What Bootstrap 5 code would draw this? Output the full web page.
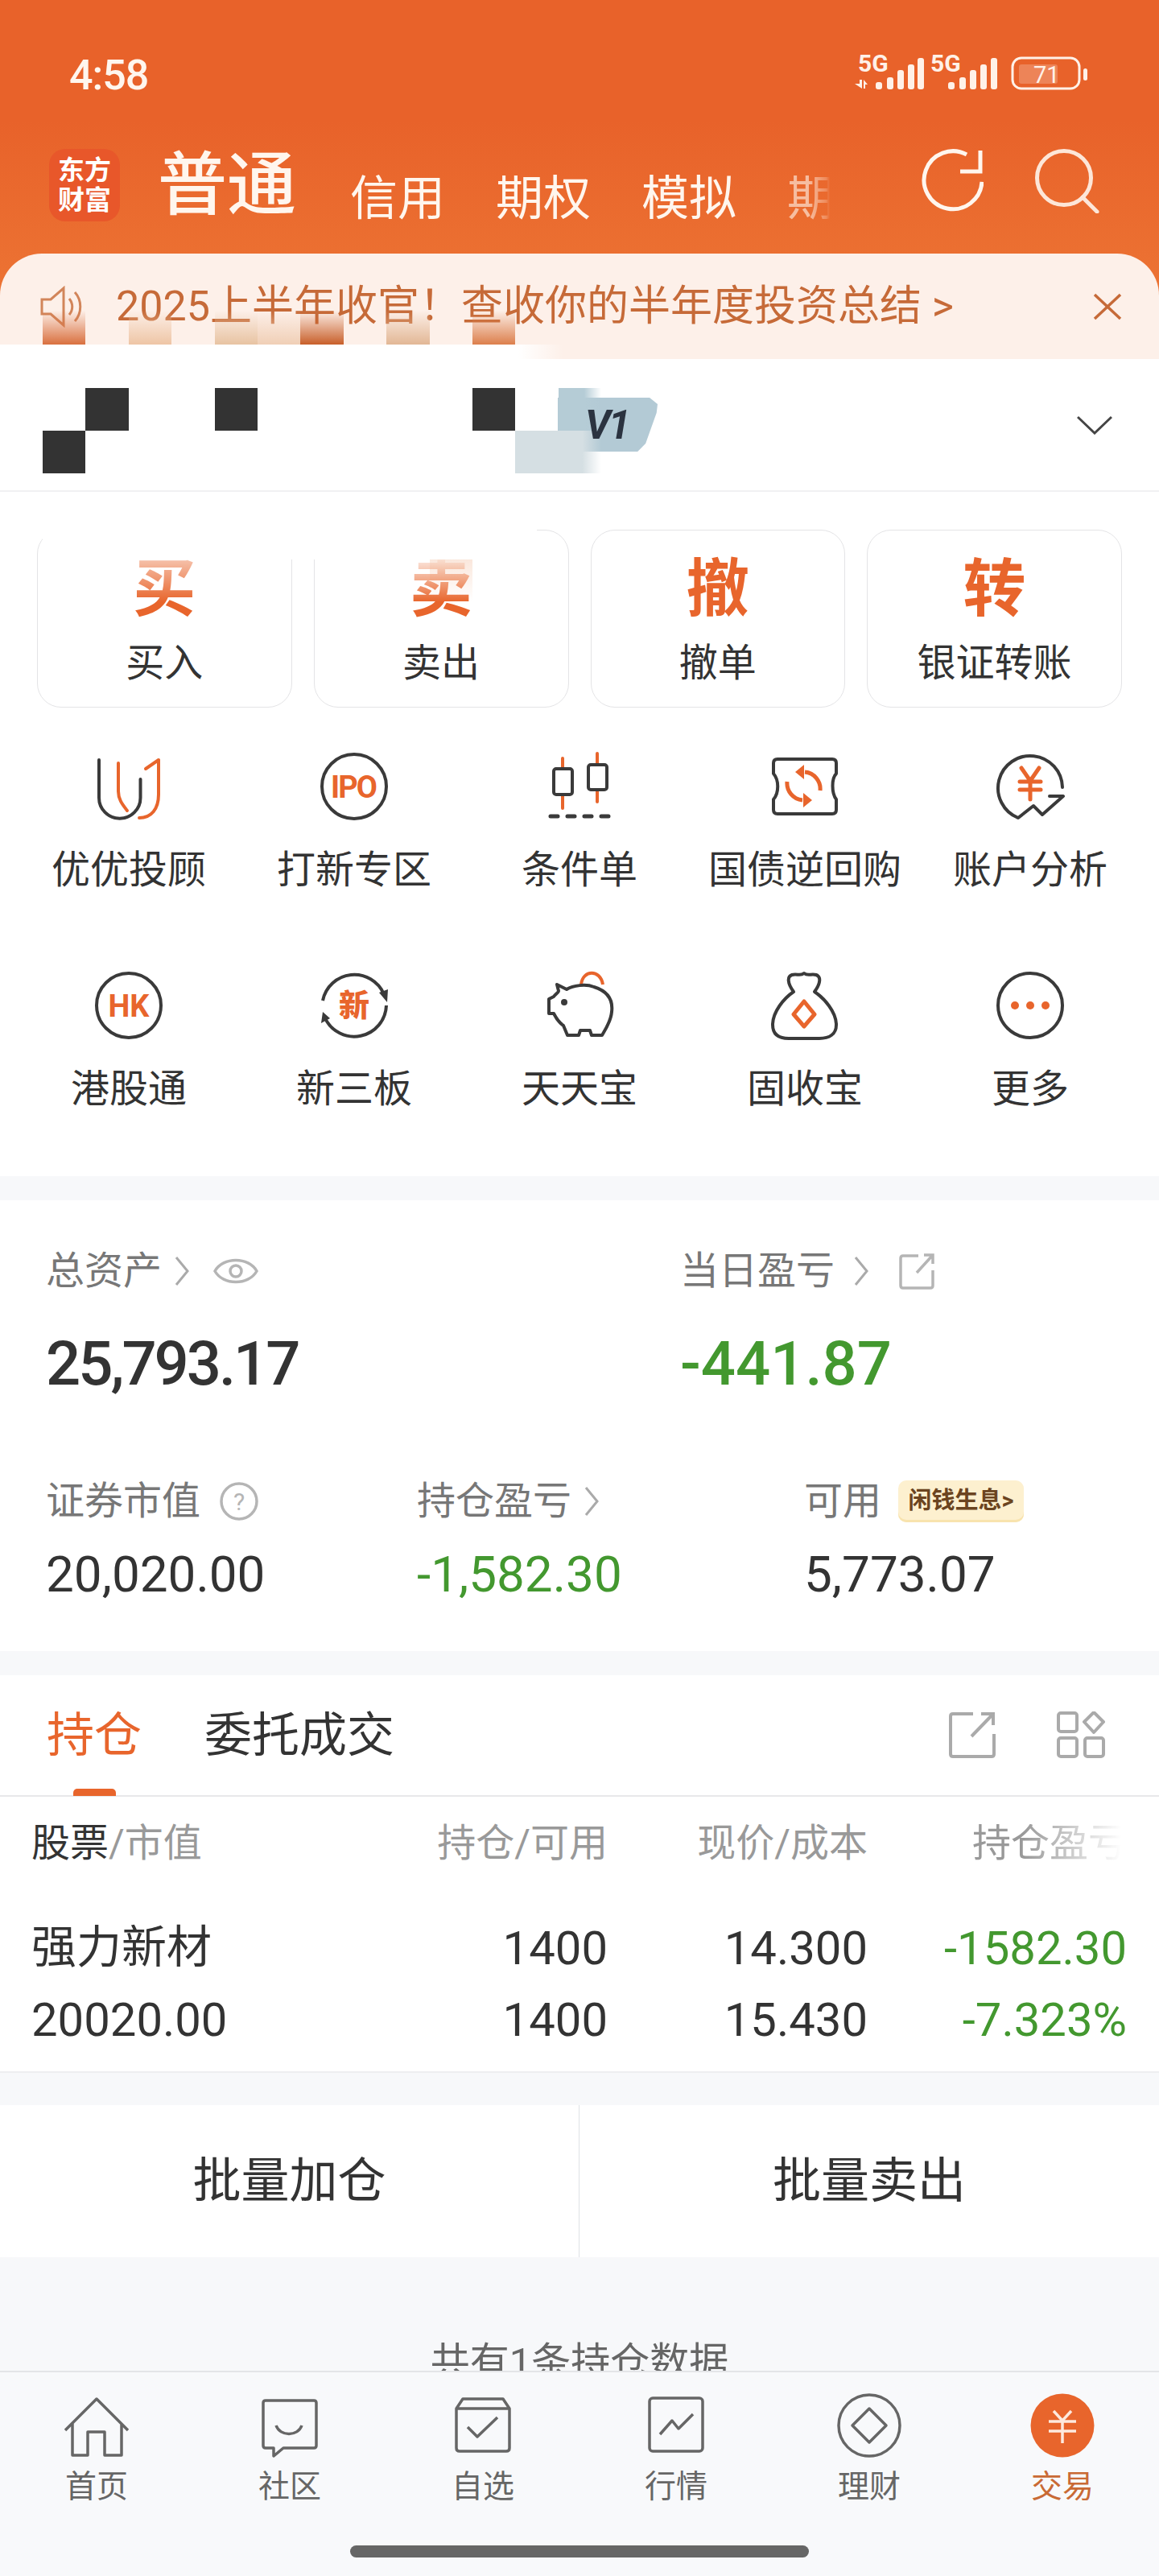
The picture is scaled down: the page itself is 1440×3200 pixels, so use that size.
<!DOCTYPE html>
<html lang="zh-CN">
<head>
    <meta charset="UTF-8">
    <title>交易</title>
    <link href="https://cdn.jsdelivr.net/npm/bootstrap@5.3.3/dist/css/bootstrap.min.css" rel="stylesheet">
    <style>
        body {
            font-family: Roboto, "Noto Sans CJK SC", sans-serif;
            background-color: #f7f8fa;
            color: #333;
            line-height: 1;
        }

        .app-shell { width: 1440px; height: 3200px; overflow: hidden; }

        /* header */
        .top-head { height: 446px; background: linear-gradient(#e8622a 0, #e8622a 150px, #ee7a37 446px); color: #fff6ee; }
        .status-row { height: 185px; padding: 54px 88px 0 86px; }
        .status-time { font-size: 52px; font-weight: 500; letter-spacing: -1px; margin-top: 14px; }
        .head-nav { height: 130px; padding: 0 74px 0 61px; }
        .app-logo { width: 88px; height: 90px; border-radius: 20px; background: #e8572a; color: #fff; font-size: 33px; line-height: 37px; font-weight: 700; text-align: center; padding-top: 8px; }
        .nav-main { font-size: 86px; margin: 3px 0 0 47px; font-weight: 500; }
        .nav-tabs-box { width: 589px; margin-left: 67px; margin-top: 32px; gap: 63px; font-size: 59px; white-space: nowrap; }
        .nav-fade { opacity: .6; -webkit-mask-image: linear-gradient(90deg, #000 45%, rgba(0, 0, 0, .4) 82%, transparent 90%); mask-image: linear-gradient(90deg, #000 45%, rgba(0, 0, 0, .4) 82%, transparent 90%); }
        .head-btns { gap: 64px; margin-left: auto; }
        .head-banner { height: 131px; background: #fdf0e9; border-radius: 52px 52px 0 0; color: #c66a38; font-size: 52px; padding: 0 46px 0 50px; }
        .banner-text { margin-left: 40px; white-space: nowrap; }

        /* account */
        .account-row { height: 165px; padding-right: 58px; background: #fff; border-bottom: 2px solid #f1f1f3; }

        /* mosaic over the name */
        .mosaic-grid { position: absolute; left: 53px; top: 375px; display: grid; grid-template-columns: repeat(13, 53.4px); grid-template-rows: repeat(7, 53.3px); z-index: 5; pointer-events: none; }
        .m-a { grid-area: 1 / 1; background: linear-gradient(transparent 20%, #d9703f); }
        .m-b { grid-area: 1 / 3; background: linear-gradient(transparent 20%, #eec5a5); }
        .m-c { grid-area: 1 / 5; background: linear-gradient(transparent 20%, #e8c3a2); }
        .m-d { grid-area: 1 / 6; background: linear-gradient(transparent 20%, #f0cfb6); }
        .m-e { grid-area: 1 / 7; background: linear-gradient(transparent 20%, #c85f2a); }
        .m-f { grid-area: 1 / 9; background: linear-gradient(transparent 20%, #e2b795); }
        .m-g { grid-area: 1 / 11; background: linear-gradient(transparent 20%, #dc7f4c); }
        .m-dark1 { grid-area: 3 / 2; background: #333; }
        .m-dark2 { grid-area: 3 / 5; background: #333; }
        .m-dark3 { grid-area: 3 / 11; background: #333; }
        .m-dark4 { grid-area: 4 / 1; background: #333; }
        .m-blue { grid-area: 3 / 13; background: linear-gradient(90deg, #b5ccd6 60%, transparent); }
        .m-pale { grid-area: 4 / 12 / 5 / 14; background: linear-gradient(90deg, #d5dfe3 78%, transparent); }
        .m-wash { grid-area: 6 / 1 / 7 / 13; width: 614px; background: #fff; }
        .m-wash2 { grid-area: 7 / 3 / 8 / 5; background: linear-gradient(rgba(255, 255, 255, .6), transparent); }
        .m-wash3 { grid-area: 7 / 9; background: linear-gradient(rgba(255, 255, 255, .85), transparent); }
        .m-tint { grid-area: 7 / 10; background: linear-gradient(rgba(250, 230, 218, .95), rgba(250, 230, 218, 0)); }
        .m-strip { position: absolute; left: 0; top: 428px; width: 700px; height: 18px; background: linear-gradient(90deg, #fff 92%, transparent); z-index: 4; }
        .vip-tag { position: absolute; left: 693px; top: 494px; width: 124px; height: 67px; background: #b3cad5; clip-path: polygon(0 0, 92% 0, 100% 12%, 99% 28%, 88% 85%, 80% 100%, 0 100%); z-index: 4; }
        .vip-text { position: absolute; left: 727px; top: 503px; color: #2b3340; font-size: 50px; font-weight: 700; font-style: italic; letter-spacing: -3px; z-index: 6; }

        /* actions */
        .action-sec { background: #fff; padding: 47px 20px 84px; }
        .action-cards { gap: 27px; padding: 0 26px; margin-bottom: 56px; }
        .action-card { height: 221px; border: 1px solid #e4e4e6; border-radius: 30px; padding-top: 35px; text-align: center; flex: 1 1 0; }
        .action-big { font-size: 78px; font-weight: 700; color: #e8652c; margin-bottom: 28px; }
        .action-label { font-size: 48px; }
        .quick-item { text-align: center; height: 272px; }
        .quick-item:nth-last-child(-n+5) { height: 170px; }
        .quick-icon { display: block; width: 84px; height: 84px; margin: 0 auto 38px; overflow: visible; }
        .quick-label { font-size: 48px; white-space: nowrap; }

        /* assets */
        .band-sec { margin-top: 30px; background: #fff; }
        .asset-sec { height: 560px; padding: 65px 0 0 57px; }
        .asset-label { font-size: 48px; color: #777; height: 46px; }
        .asset-big { font-size: 76px; font-weight: 500; margin-top: 54px; }
        .asset-total { letter-spacing: -3px; }
        .asset-mid { font-size: 62px; margin-top: 37px; }
        .asset-line2 { margin-top: 110px; }
        .col-w1 { width: 788px; }
        .col-w2 { width: 461px; }
        .col-w3 { width: 481px; }
        .gap-30 { margin-left: 30px; }
        .gap-36 { margin-left: 36px; }
        .pnl-green { color: #43982f; }
        .idle-pill { margin-left: 21px; height: 52px; width: 156px; background: #fdf0cf; border-radius: 10px; box-shadow: inset 0 -3px 0 #f8e3ae; color: #6b4420; font-size: 29px; font-weight: 700; padding-top: 11px; text-align: center; white-space: nowrap; }

        /* holdings */
        .tabs-row { height: 151px; padding: 45px 67px 0 58px; border-bottom: 2px solid #e8e8ea; position: relative; }
        .tab-active { font-size: 59px; color: #e8652c; }
        .tab-other { font-size: 59px; margin-left: 78px; }
        .tab-marker { position: absolute; left: 91px; bottom: -1px; width: 53px; height: 9px; background: #e8652c; border-radius: 5px 5px 0 0; }
        .tab-icons { gap: 76px; margin-left: auto; }
        .hold-grid { display: grid; grid-template-columns: 463px 253px 323px 322px; padding-left: 39px; text-align: right; }
        .hold-grid > :first-child { text-align: left; }
        .hold-head { padding-top: 34px; font-size: 48px; color: #999; }
        .hold-head b { font-weight: 400; color: #333; }
        .hold-fade { -webkit-mask-image: linear-gradient(90deg, #000 60%, transparent 98%); mask-image: linear-gradient(90deg, #000 60%, transparent 98%); }
        .hold-row { font-size: 58px; margin-top: 31px; }
        .hold-first { margin-top: 77px; }
        .hold-name { font-size: 56px; }
        .hold-body { height: 343px; border-bottom: 2px solid #eeeef0; }
        .batch-row { margin-top: 40px; height: 189px; background: #fff; font-size: 60px; }
        .batch-btn { width: 50%; }
        .rows-note { margin-top: 106px; font-size: 49px; color: #666; text-align: center; }

        /* bottom bar */
        .tabbar { height: 255px; flex: none; background: #f8f9fb; border-top: 2px solid #e4e5e8; padding-top: 26px; z-index: 2; }
        .tabbar-item { width: 240px; text-align: center; font-size: 39px; color: #666; }
        .tabbar-icon { height: 80px; margin-bottom: 17px; }
        .tabbar-on { color: #c96a35; }
        .home-pill { width: 570px; height: 15px; border-radius: 8px; background: #666; margin: 53px auto 0; }
    </style>
</head>
<body>
<div class="app-shell d-flex flex-column position-relative">
    <div class="flex-grow-1 overflow-hidden">
        <header class="top-head">
            <div class="status-row d-flex justify-content-between align-items-start">
                <div class="status-time">4:58</div>
                <svg width="290" height="58" viewBox="0 -12 290 58" fill="#fff1e8">
                    <text x="4" y="23" font-family="Roboto" font-size="30" font-weight="700">5G</text>
                    <path d="M0 38 L6 38 V33 H9 V44 Z M11 33 L16 39 H13 V44 H11 Z"/>
                    <rect x="26" y="36" width="8" height="9" rx="3"/><rect x="40" y="30" width="8" height="15" rx="3"/><rect x="53" y="21" width="8" height="24" rx="3"/><rect x="66" y="14" width="8" height="31" rx="3"/><rect x="78" y="6" width="8" height="39" rx="3"/>
                    <text x="94" y="23" font-family="Roboto" font-size="30" font-weight="700">5G</text>
                    <rect x="116" y="36" width="8" height="9" rx="3"/><rect x="130" y="30" width="8" height="15" rx="3"/><rect x="143" y="21" width="8" height="24" rx="3"/><rect x="156" y="14" width="8" height="31" rx="3"/><rect x="169" y="6" width="8" height="39" rx="3"/>
                    <rect x="196" y="6" width="83" height="38" rx="11" fill="none" stroke="#fff1e8" stroke-width="3"/>
                    <rect x="204" y="14" width="48" height="24" rx="3" fill="#fff" fill-opacity=".22"/>
                    <text x="222" y="37" font-family="Roboto" font-size="29">71</text>
                    <rect x="284" y="19" width="5" height="15" rx="2.5"/>
                </svg>
            </div>
            <div class="head-nav d-flex align-items-start">
                <div class="app-logo">东方<br>财富</div>
                <div class="nav-main">普通</div>
                <div class="nav-tabs-box d-flex">
                    <span>信用</span><span>期权</span><span>模拟</span><span class="nav-fade">期</span>
                </div>
                <div class="head-btns d-flex">
                    <svg width="78" height="78" viewBox="0 0 78 78" fill="none" stroke="#fff6ee" stroke-width="5">
                        <path d="M76 41 A36 36 0 1 1 57 7"/>
                        <path d="M74 2 V28 H49"/>
                    </svg>
                    <svg width="80" height="80" viewBox="0 0 80 80" fill="none" stroke="#fde6d8" stroke-width="5">
                        <circle cx="36" cy="36" r="33.5"/>
                        <path d="M59 60 L77 78" stroke-linecap="round"/>
                    </svg>
                </div>
            </div>
            <div class="head-banner d-flex align-items-center">
                <svg width="54" height="52" viewBox="0 0 54 52" fill="none" stroke="#d2855a" stroke-width="3">
                    <path d="M2 17 H13 L29 3 V49 L13 35 H2 Z"/>
                    <path d="M36 16 C41 22 41 30 36 36"/>
                    <path d="M43 8 C52 18 52 34 43 44"/>
                </svg>
                <span class="banner-text">2025上半年收官！查收你的半年度投资总结 &gt;</span>
                <svg class="ms-auto" width="36" height="34" viewBox="0 0 36 34" fill="none" stroke="#c66a38" stroke-width="3.5">
                    <path d="M2 2 L34 32 M34 2 L2 32"/>
                </svg>
            </div>
        </header>

        <section class="account-row d-flex justify-content-end align-items-center">
            <svg width="44" height="24" viewBox="0 0 44 24" fill="none" stroke="#444" stroke-width="3">
                <path d="M1 2 L22 22 L43 2"/>
            </svg>
        </section>

        <section class="action-sec">
            <div class="action-cards d-flex">
                <div class="action-card"><div class="action-big">买</div><div class="action-label">买入</div></div>
                <div class="action-card"><div class="action-big">卖</div><div class="action-label">卖出</div></div>
                <div class="action-card"><div class="action-big">撤</div><div class="action-label">撤单</div></div>
                <div class="action-card"><div class="action-big">转</div><div class="action-label">银证转账</div></div>
            </div>
            <div class="row row-cols-5 g-0">
                <div class="col quick-item">
                    <svg class="quick-icon" viewBox="0 0 84 84" fill="none" stroke-width="4" stroke-linecap="round" stroke-linejoin="round">
                        <path stroke="#3a3a3a" d="M5 9 V56 a25.7 25.7 0 0 0 51.5 0 V33"/>
                        <path stroke="#e8652c" d="M29 13 V48 C29 58 34 64 40 72"/>
                        <path stroke="#e8652c" d="M63 20 L79 9 V52 C79 70 70 81 55 81"/>
                    </svg>
                    <div class="quick-label">优优投顾</div>
                </div>
                <div class="col quick-item">
                    <svg class="quick-icon" viewBox="0 0 84 84" fill="none">
                        <circle cx="42" cy="42" r="40" stroke="#3a3a3a" stroke-width="4"/>
                        <text x="41" y="56" text-anchor="middle" font-family="Roboto" font-size="38" font-weight="700" letter-spacing="-2" fill="#e8652c">IPO</text>
                    </svg>
                    <div class="quick-label">打新专区</div>
                </div>
                <div class="col quick-item">
                    <svg class="quick-icon" viewBox="0 0 84 84" fill="none" stroke-width="4" stroke-linecap="round">
                        <path stroke="#e8652c" d="M21 7 V69 M64 1 V61"/>
                        <rect x="10" y="20" width="23" height="32" rx="3" fill="#fff" stroke="#3a3a3a"/>
                        <rect x="53" y="15" width="23" height="31" rx="3" fill="#fff" stroke="#3a3a3a"/>
                        <path stroke="#3a3a3a" stroke-width="5" d="M6 79 H15 M27 79 H36 M48 79 H57 M69 79 H78"/>
                    </svg>
                    <div class="quick-label">条件单</div>
                </div>
                <div class="col quick-item">
                    <svg class="quick-icon" viewBox="0 0 84 84" fill="none" stroke-width="4" stroke-linejoin="round">
                        <path stroke="#3a3a3a" d="M8 8 H76 Q81 8 81 13 V26 C75 32 75 50 81 58 V71 Q81 76 76 76 H8 Q3 76 3 71 V58 C10 50 10 34 3 26 V13 Q3 8 8 8 Z"/>
                        <path stroke="#e8652c" stroke-width="5" d="M61 47 A21 21 0 0 0 42 24 M20 36 A21 21 0 0 0 39 59"/>
                        <path fill="#e8652c" d="M41 15 V33 L30 24 Z M40 50 V68 L51 59 Z"/>
                    </svg>
                    <div class="quick-label">国债逆回购</div>
                </div>
                <div class="col quick-item">
                    <svg class="quick-icon" viewBox="0 0 84 84" fill="none" stroke-width="4" stroke-linejoin="round" stroke-linecap="round">
                        <path stroke="#3a3a3a" d="M82 43 A40 40 0 1 0 27 81 L46 66 L57 77 L83 54 H66"/>
                        <path stroke="#e8652c" stroke-width="5" d="M31 19 L42 35 L53 19 M29 36 H55 M29 46 H55 M42 35 V58"/>
                    </svg>
                    <div class="quick-label">账户分析</div>
                </div>
                <div class="col quick-item">
                    <svg class="quick-icon" viewBox="0 0 84 84" fill="none">
                        <circle cx="42" cy="42" r="40" stroke="#3a3a3a" stroke-width="4"/>
                        <text x="42" y="56" text-anchor="middle" font-family="Roboto" font-size="38" font-weight="700" fill="#e8652c">HK</text>
                    </svg>
                    <div class="quick-label">港股通</div>
                </div>
                <div class="col quick-item">
                    <svg class="quick-icon" viewBox="0 0 84 84" fill="none">
                        <path stroke="#3a3a3a" stroke-width="4" d="M3 36 A40 40 0 0 1 79 28 M82 42 A40 40 0 0 1 6 58"/>
                        <path fill="#3a3a3a" d="M73 26 L84 22 L83 38 Z M1 64 L3 50 L12 58 Z"/>
                        <text x="42" y="55" text-anchor="middle" font-size="38" font-weight="900" font-family="Noto Sans CJK SC" fill="#e8652c">新</text>
                    </svg>
                    <div class="quick-label">新三板</div>
                </div>
                <div class="col quick-item">
                    <svg class="quick-icon" viewBox="0 0 84 84" fill="none" stroke-width="4" stroke-linejoin="round">
                        <path stroke="#e8652c" d="M44 16 C46 -3 68 -3 71 16"/>
                        <path stroke="#3a3a3a" d="M14 16 L26 22 C34 17 50 15 60 19 C76 24 84 34 82 50 C81 62 74 72 70 79 H57 L55 73 H43 L41 79 H27 L22 67 C16 63 12 56 10 52 H4 V34 L10 31 C12 28 16 26 16 24 Z"/>
                        <circle cx="23" cy="38" r="4" fill="#3a3a3a"/>
                    </svg>
                    <div class="quick-label">天天宝</div>
                </div>
                <div class="col quick-item">
                    <svg class="quick-icon" viewBox="0 0 84 84" fill="none" stroke-width="4" stroke-linejoin="round">
                        <path stroke="#3a3a3a" d="M28 25 C20 14 20 6 26 4 C32 2 36 6 41 2 C46 6 50 2 56 4 C62 6 62 14 54 25 C66 33 81 50 81 66 C81 78 72 83 60 83 H22 C10 83 2 78 2 66 C2 50 16 33 28 25 Z"/>
                        <path stroke="#e8652c" stroke-width="5" d="M41 37 L54 53 L41 68 L28 53 Z"/>
                    </svg>
                    <div class="quick-label">固收宝</div>
                </div>
                <div class="col quick-item">
                    <svg class="quick-icon" viewBox="0 0 84 84" fill="none">
                        <circle cx="42" cy="42" r="40" stroke="#3a3a3a" stroke-width="4"/>
                        <circle cx="23" cy="42" r="5" fill="#e8652c"/><circle cx="42" cy="42" r="5" fill="#e8652c"/><circle cx="61" cy="42" r="5" fill="#e8652c"/>
                    </svg>
                    <div class="quick-label">更多</div>
                </div>
            </div>
        </section>

        <section class="band-sec asset-sec">
            <div class="d-flex">
                <div class="col-w1">
                    <div class="asset-label d-flex align-items-center">
                        <span>总资产</span>
                        <svg class="ms-3" width="18" height="38" viewBox="0 0 18 38" fill="none" stroke="#aaa" stroke-width="3"><path d="M2 2 L16 19 L2 36"/></svg>
                        <svg class="gap-30" width="56" height="38" viewBox="0 0 56 38" fill="none" stroke="#b5b5b5" stroke-width="3.5"><path d="M2 19 C12 1 44 1 54 19 C44 37 12 37 2 19 Z"/><circle cx="28" cy="19" r="7"/></svg>
                    </div>
                    <div class="asset-big asset-total">25,793.17</div>
                </div>
                <div>
                    <div class="asset-label d-flex align-items-center">
                        <span>当日盈亏</span>
                        <svg class="ms-4" width="18" height="38" viewBox="0 0 18 38" fill="none" stroke="#aaa" stroke-width="3"><path d="M2 2 L16 19 L2 36"/></svg>
                        <svg class="gap-36" width="48" height="46" viewBox="0 0 44 46" fill="none" stroke="#b5b5b5" stroke-width="3.5"><path d="M24 4 H5 Q2 4 2 7 V41 Q2 44 5 44 H39 Q42 44 42 41 V22"/><path d="M22 25 L42 3 M31 3 H42 V14"/></svg>
                    </div>
                    <div class="asset-big pnl-green">-441.87</div>
                </div>
            </div>
            <div class="d-flex asset-line2">
                <div class="col-w2">
                    <div class="asset-label d-flex align-items-center">
                        <span>证券市值</span>
                        <svg class="ms-4" width="48" height="48" viewBox="0 0 48 48" fill="none"><circle cx="24" cy="24" r="22" stroke="#b5b5b5" stroke-width="3.5"/><text x="24" y="35" text-anchor="middle" font-size="30" font-family="Roboto" fill="#b5b5b5">?</text></svg>
                    </div>
                    <div class="asset-mid">20,020.00</div>
                </div>
                <div class="col-w3">
                    <div class="asset-label d-flex align-items-center">
                        <span>持仓盈亏</span>
                        <svg class="ms-3" width="18" height="38" viewBox="0 0 18 38" fill="none" stroke="#aaa" stroke-width="3"><path d="M2 2 L16 19 L2 36"/></svg>
                    </div>
                    <div class="asset-mid pnl-green">-1,582.30</div>
                </div>
                <div>
                    <div class="asset-label d-flex align-items-center">
                        <span>可用</span>
                        <div class="idle-pill">闲钱生息&gt;</div>
                    </div>
                    <div class="asset-mid">5,773.07</div>
                </div>
            </div>
        </section>

        <section class="band-sec">
            <div class="tabs-row d-flex align-items-start">
                <div class="tab-active">持仓</div>
                <div class="tab-other">委托成交</div>
                <div class="tab-marker"></div>
                <div class="tab-icons d-flex">
                    <svg width="58" height="58" viewBox="0 0 58 58" fill="none" stroke="#aaa" stroke-width="4"><path d="M30 3 H5 Q2 3 2 6 V53 Q2 56 5 56 H53 Q56 56 56 53 V28"/><path d="M28 31 L55 3 M40 3 H55 V17"/></svg>
                    <svg width="60" height="58" viewBox="0 0 60 58" fill="none" stroke="#aaa" stroke-width="4" stroke-linejoin="round"><rect x="2" y="2" width="23" height="23" rx="3"/><path d="M46 1 L58 13 L46 26 L34 13 Z"/><rect x="2" y="33" width="23" height="23" rx="3"/><rect x="35" y="33" width="23" height="23" rx="3"/></svg>
                </div>
            </div>
            <div class="hold-body">
                <div class="hold-grid hold-head">
                    <span><b>股票</b>/市值</span><span>持仓/可用</span><span>现价/成本</span><span class="hold-fade">持仓盈亏</span>
                </div>
                <div class="hold-grid hold-row hold-first">
                    <span class="hold-name">强力新材</span><span>1400</span><span>14.300</span><span class="pnl-green">-1582.30</span>
                </div>
                <div class="hold-grid hold-row">
                    <span>20020.00</span><span>1400</span><span>15.430</span><span class="pnl-green">-7.323%</span>
                </div>
            </div>
        </section>

        <section class="batch-row d-flex">
            <div class="batch-btn d-flex align-items-center justify-content-center border-end">批量加仓</div>
            <div class="batch-btn d-flex align-items-center justify-content-center">批量卖出</div>
        </section>
        <div class="rows-note">共有1条持仓数据</div>
    </div>

    <nav class="tabbar">
        <div class="d-flex">
            <div class="tabbar-item">
                <div class="tabbar-icon d-flex justify-content-center align-items-end"><svg width="80" height="75" viewBox="0 0 80 75" fill="none" stroke="#666" stroke-width="3.5" stroke-linejoin="round"><path d="M1 41 L40 2 L79 41 M10 32 V72 H29 V43 H50 V72 H71 V32"/></svg></div>
                首页
            </div>
            <div class="tabbar-item">
                <div class="tabbar-icon d-flex justify-content-center align-items-end"><svg width="72" height="74" viewBox="0 0 72 74" fill="none" stroke="#666" stroke-width="3.5" stroke-linejoin="round"><path d="M6 3 H66 Q69 3 69 6 V59 Q69 62 66 62 H28 L16 72 V62 H6 Q3 62 3 59 V6 Q3 3 6 3 Z"/><path d="M19 34 C24 48 46 48 51 34"/></svg></div>
                社区
            </div>
            <div class="tabbar-item">
                <div class="tabbar-icon d-flex justify-content-center align-items-start"><svg class="mt-1" width="72" height="72" viewBox="0 0 72 72" fill="none" stroke="#666" stroke-width="3.5" stroke-linejoin="round"><path d="M11 3 H61 L69 15 V64 Q69 68 65 68 H7 Q3 68 3 64 V15 Z M3 15 H69"/><path d="M17 38 L29 50 L54 26"/></svg></div>
                自选
            </div>
            <div class="tabbar-item">
                <div class="tabbar-icon d-flex justify-content-center align-items-start"><svg class="mt-1" width="70" height="70" viewBox="0 0 70 70" fill="none" stroke="#666" stroke-width="3.5" stroke-linejoin="round"><rect x="2" y="2" width="66" height="66" rx="4"/><path d="M15 47 L30 30 L38 40 L56 22"/></svg></div>
                行情
            </div>
            <div class="tabbar-item">
                <div class="tabbar-icon d-flex justify-content-center align-items-start"><svg width="80" height="80" viewBox="0 0 80 80" fill="none" stroke="#666" stroke-width="3.5" stroke-linejoin="round"><circle cx="40" cy="40" r="38"/><path d="M40 19 L61 40 L40 61 L19 40 Z"/></svg></div>
                理财
            </div>
            <div class="tabbar-item tabbar-on">
                <div class="tabbar-icon d-flex justify-content-center align-items-start"><svg width="80" height="80" viewBox="0 0 80 80" fill="none"><circle cx="40" cy="40" r="39.5" fill="#e8652c"/><path stroke="#fde9dd" stroke-width="3.5" d="M29 22 L40 34 L51 22 M23 35 H57 M23 47 H57 M40 34 V62"/></svg></div>
                交易
            </div>
        </div>
        <div class="home-pill"></div>
    </nav>

    <!-- mosaic hiding the account name, lies over everything -->
    <div class="m-strip"></div>
    <div class="vip-tag"></div>
    <div class="mosaic-grid">
        <i class="m-a"></i><i class="m-b"></i><i class="m-c"></i><i class="m-d"></i><i class="m-e"></i><i class="m-f"></i><i class="m-g"></i>
        <i class="m-dark1"></i><i class="m-dark2"></i><i class="m-dark3"></i><i class="m-dark4"></i>
        <i class="m-blue"></i><i class="m-pale"></i><i class="m-wash"></i><i class="m-wash2"></i><i class="m-wash3"></i><i class="m-tint"></i>
    </div>
    <div class="vip-text">V1</div>
</div>

<script src="https://cdn.jsdelivr.net/npm/bootstrap@5.3.3/dist/js/bootstrap.bundle.min.js"></script>
</body>
</html>
